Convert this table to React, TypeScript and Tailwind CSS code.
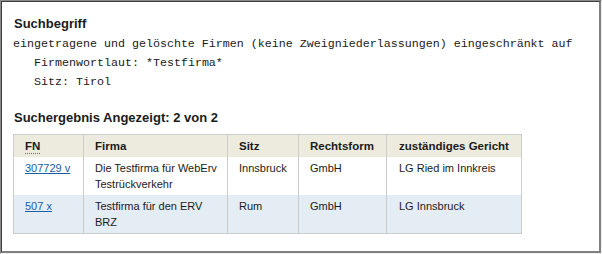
import React from 'react';

type Treffer = {
  fn: string;
  firma: string[];
  sitz: string;
  rechtsform: string;
  gericht: string;
};

const TREFFER: Treffer[] = [
  { fn: '307729 v', firma: ['Die Testfirma für WebErv', 'Testrückverkehr'], sitz: 'Innsbruck', rechtsform: 'GmbH', gericht: 'LG Ried im Innkreis' },
  { fn: '507 x', firma: ['Testfirma für den ERV', 'BRZ'], sitz: 'Rum', rechtsform: 'GmbH', gericht: 'LG Innsbruck' },
];

const sans = "font-['Liberation_Sans',Arial,sans-serif]";
const mono = "font-['Liberation_Mono','Courier_New',monospace]";

const App: React.FC = () => {
  return (
    <div className="w-[602px] h-[254px] bg-white">
      {/* Sunken frame around the result panel */}
      <div className="h-full border-t border-l border-[#8a8a8a] border-r border-b border-r-[#f0f0f0] border-b-[#f0f0f0]">
        <div className="h-full border-t border-l border-[#404040] border-r-2 border-b-2 border-r-[#808080] border-b-[#808080] pl-[11px] pt-[14px] text-[#1b1b1b]">
          <h2 className={`${sans} text-[13px] font-bold leading-4 pl-px`}>Suchbegriff</h2>
          <div className={`${mono} text-[11.67px] leading-[19px] mt-[3px]`}>
            <p>eingetragene und gelöschte Firmen (keine Zweigniederlassungen) eingeschränkt auf</p>
            <p className="pl-[21px]">Firmenwortlaut: *Testfirma*</p>
            <p className="pl-[21px]">Sitz: Tirol</p>
          </div>

          <h2 className={`${sans} text-[13px] font-bold leading-4 pl-px mt-[18px]`}>Suchergebnis Angezeigt: 2 von 2</h2>

          <table className={`${sans} table-fixed w-[508px] mt-[8px] border border-[#cccccc] border-collapse text-[11px] leading-4 text-left whitespace-nowrap`}>
            <colgroup>
              <col className="w-[70px]" />
              <col className="w-[144px]" />
              <col className="w-[71px]" />
              <col className="w-[88px]" />
              <col className="w-[135px]" />
            </colgroup>
            <thead>
              <tr className="bg-[#ecebde]">
                <th className="px-[11px] py-[3px] font-bold text-[11.5px]">
                  <abbr className="no-underline decoration-0" title="Firmenbuchnummer">
                    <span className="underline decoration-dotted decoration-[#777] underline-offset-[3px]">FN</span>
                  </abbr>
                </th>
                <th className="px-[11px] py-[3px] border-l border-[#cccccc] font-bold text-[11.5px]">Firma</th>
                <th className="px-[11px] py-[3px] border-l border-[#cccccc] font-bold text-[11.5px]">Sitz</th>
                <th className="px-[11px] py-[3px] border-l border-[#cccccc] font-bold text-[11.5px]">Rechtsform</th>
                <th className="pl-[12px] pr-[6px] py-[3px] border-l border-[#cccccc] font-bold text-[11.5px]">zuständiges Gericht</th>
              </tr>
            </thead>
            <tbody>
              {TREFFER.map((t, i) => (
                <tr key={t.fn} className={i % 2 === 1 ? 'bg-[#e4ecf4]' : 'bg-white'}>
                  <td className="align-top px-[11px] py-[3px]">
                    <a href="#" className="text-[#1a5ca8] underline">{t.fn}</a>
                  </td>
                  <td className="align-top px-[11px] py-[3px] border-l border-[#cccccc]">
                    {t.firma.map(z => <div key={z}>{z}</div>)}
                  </td>
                  <td className="align-top px-[11px] py-[3px] border-l border-[#cccccc]">{t.sitz}</td>
                  <td className="align-top px-[11px] py-[3px] border-l border-[#cccccc]">{t.rechtsform}</td>
                  <td className="align-top pl-[12px] pr-[6px] py-[3px] border-l border-[#cccccc]">{t.gericht}</td>
                </tr>
              ))}
            </tbody>
          </table>
        </div>
      </div>
    </div>
  );
};

export default App;
